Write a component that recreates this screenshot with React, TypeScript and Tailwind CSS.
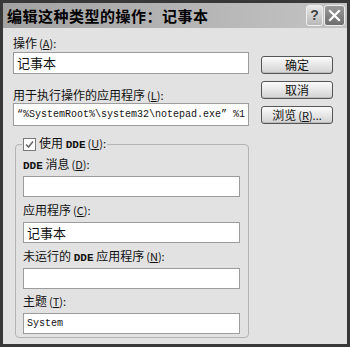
import React from "react";

const cjk = { fontFamily: '"Noto Sans CJK SC", "Noto Sans", sans-serif' };
const mono = { fontFamily: '"Liberation Mono", "DejaVu Sans Mono", monospace' };

function Key({ k }: { k: string }) {
  return (
    <span className="text-[11px] ml-[2px]">
      (<u>{k}</u>):
    </span>
  );
}

function Label({ children }: { children: React.ReactNode }) {
  return <div className="h-[14px] leading-[14px] text-[12px] text-[#111] whitespace-nowrap">{children}</div>;
}

function Field({ value, isMono, h = "h-[21px]" }: { value?: string; isMono?: boolean; h?: string }) {
  return (
    <div
      className={`${h} bg-white border border-[#9c9c9c] flex items-center px-[3px] text-[#111] whitespace-nowrap overflow-hidden ${
        isMono ? "text-[10px]" : "text-[13px]"
      }`}
      style={isMono ? mono : cjk}
    >
      {value}
    </div>
  );
}

function Btn({ children }: { children: React.ReactNode }) {
  return (
    <div className="h-[18px] w-[72px] rounded-[3px] border border-[#555] bg-gradient-to-b from-[#fbfbfb] to-[#d2d2d2] flex items-center justify-center text-[12px] text-[#111] shadow-[inset_0_-1px_0_#bbb]">
      {children}
    </div>
  );
}

export default function App() {
  return (
    <div className="w-[350px] h-[347px] bg-[#e2e2e2] border-[3px] border-[#383838] flex flex-col overflow-hidden" style={cjk}>
      {/* Title bar */}
      <div className="h-[25px] shrink-0 flex items-center bg-gradient-to-r from-[#a3a3a3] via-[#b3b3b3] to-[#c4c4c4] pl-[4px] pr-[2px]">
        <div className="text-[15px] font-bold text-black flex-1 leading-none tracking-[0.5px]">编辑这种类型的操作：记事本</div>
        <div className="flex gap-[1px]">
          <div className="w-[17px] h-[21px] rounded-[3px] border border-[#eee] bg-gradient-to-b from-[#e8e8e8] to-[#b8b8b8] flex items-center justify-center text-[14px] font-bold text-[#444]" style={{ fontFamily: '"Liberation Sans", sans-serif' }}>
            ?
          </div>
          <div className="w-[21px] h-[21px] rounded-[3px] border border-[#eee] bg-gradient-to-b from-[#9a9a9a] to-[#6e6e6e] flex items-center justify-center">
            <svg width="13" height="13" viewBox="0 0 13 13">
              <path d="M2 2 L11 11 M11 2 L2 11" stroke="white" strokeWidth="2.2" strokeLinecap="square" />
            </svg>
          </div>
        </div>
      </div>

      {/* Body */}
      <div className="flex flex-1 pl-[10px] pr-[11px]">
        <div className="w-[236px] flex flex-col">
          <div className="mt-[8px]">
            <Label>
              操作<Key k="A" />
            </Label>
          </div>
          <div className="mt-[2px]">
            <Field value="记事本" h="h-[22px]" />
          </div>
          <div className="mt-[14px]">
            <Label>
              用于执行操作的应用程序<Key k="L" />
            </Label>
          </div>
          <div className="mt-[1px]">
            <Field value="“%SystemRoot%\system32\notepad.exe” %1" isMono h="h-[23px]" />
          </div>

          <fieldset className="mt-[11px] ml-[2px] border border-[#b4b4b4] rounded-[4px] pl-[7px] pr-[8px] pb-[3px] min-w-0">
            <legend className="px-[1px] -ml-[1px] h-[14px] flex items-center gap-[3px]">
              <span className="w-[13px] h-[13px] bg-white border border-[#7a7a7a] flex items-center justify-center">
                <svg width="9" height="9" viewBox="0 0 9 9">
                  <path d="M1 4.5 L3.5 7 L8 1.5" stroke="#6a6a6a" strokeWidth="1.6" fill="none" />
                </svg>
              </span>
              <span className="text-[12px] text-[#111] whitespace-nowrap">
                使用 <span className="font-bold text-[11px]" style={mono}>DDE</span>
                <Key k="U" />
              </span>
            </legend>
            <div className="mt-[6px]">
              <Label>
                <span className="font-bold text-[11px]" style={mono}>DDE</span> 消息<Key k="D" />
              </Label>
            </div>
            <div className="mt-[5px]">
              <Field />
            </div>
            <div className="mt-[6px]">
              <Label>
                应用程序<Key k="C" />
              </Label>
            </div>
            <div className="mt-[5px]">
              <Field value="记事本" />
            </div>
            <div className="mt-[6px]">
              <Label>
                未运行的 <span className="font-bold text-[11px]" style={mono}>DDE</span> 应用程序<Key k="N" />
              </Label>
            </div>
            <div className="mt-[5px]">
              <Field />
            </div>
            <div className="mt-[5px]">
              <Label>
                主题<Key k="T" />
              </Label>
            </div>
            <div className="mt-[5px]">
              <Field value="System" isMono />
            </div>
          </fieldset>
        </div>

        <div className="ml-[12px] mt-[28px] flex flex-col gap-[7px]">
          <Btn>确定</Btn>
          <Btn>取消</Btn>
          <Btn>
            <span>
              浏览<span className="text-[11px] ml-[2px]">(<u>R</u>)...</span>
            </span>
          </Btn>
        </div>
      </div>
    </div>
  );
}
